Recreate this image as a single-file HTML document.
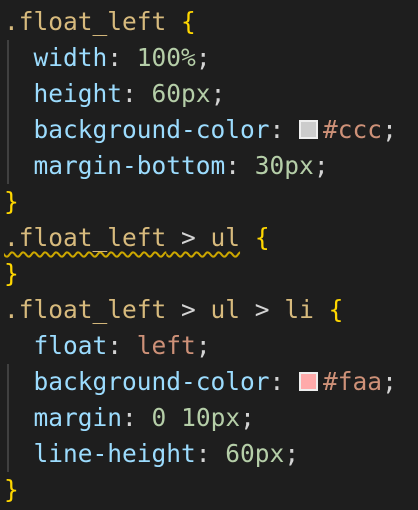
<!DOCTYPE html>
<html><head><style>
html,body{margin:0;padding:0;background:#1e1e1e;width:418px;height:510px;overflow:hidden}
pre{margin:0;position:absolute;left:4px;top:4px;font-family:"DejaVu Sans Mono","Liberation Mono",monospace;font-size:24.5px;line-height:36px;color:#d4d4d4}
.s{color:#d7ba7d}.b{color:#ffd700}.p{color:#9cdcfe}.n{color:#b5cea8}.v{color:#ce9178}
.w{text-decoration:underline wavy #cca700;text-decoration-thickness:1.5px;text-underline-offset:5px}
.sw{display:inline-block;width:19px;height:19px;border:2px solid #eee;box-sizing:border-box;vertical-align:-1px;margin-right:5px}
.g{position:absolute;left:7px;width:2px;background:#404040}
</style></head><body>
<div class="g" style="top:40px;height:144px"></div>
<div class="g" style="top:364px;height:108px"></div>
<pre><span class="s">.float_left</span> <span class="b">{</span>
  <span class="p">width</span>: <span class="n">100%</span>;
  <span class="p">height</span>: <span class="n">60px</span>;
  <span class="p">background-color</span>: <span class="sw" style="background:#ccc"></span><span class="v">#ccc</span>;
  <span class="p">margin-bottom</span>: <span class="n">30px</span>;
<span class="b">}</span>
<span class="w"><span class="s">.float_left</span> &gt; <span class="s">ul</span></span> <span class="b">{</span>
<span class="b">}</span>
<span class="s">.float_left</span> &gt; <span class="s">ul</span> &gt; <span class="s">li</span> <span class="b">{</span>
  <span class="p">float</span>: <span class="v">left</span>;
  <span class="p">background-color</span>: <span class="sw" style="background:#faa"></span><span class="v">#faa</span>;
  <span class="p">margin</span>: <span class="n">0</span> <span class="n">10px</span>;
  <span class="p">line-height</span>: <span class="n">60px</span>;
<span class="b">}</span></pre>
</body></html>
